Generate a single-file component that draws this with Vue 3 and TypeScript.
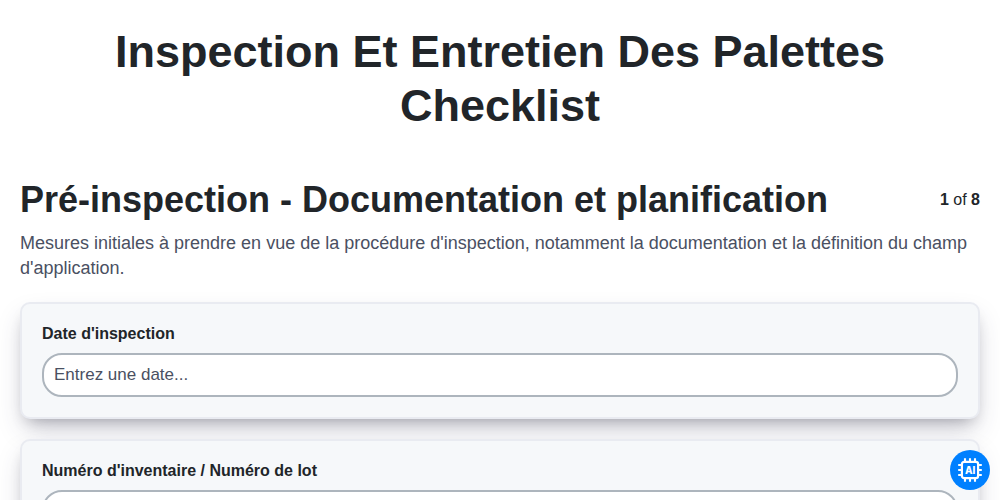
<script setup lang="ts">
import { ref } from 'vue'

interface Field {
  id: string
  label: string
  placeholder: string
}

const step = 1
const totalSteps = 8

const fields: Field[] = [
  { id: 'date', label: "Date d'inspection", placeholder: 'Entrez une date...' },
  { id: 'lot', label: 'Numéro d\'inventaire / Numéro de lot', placeholder: 'Écrire quelque chose...' }
]

const answers = ref<Record<string, string>>({ date: '', lot: '' })
</script>

<template>
  <main class="checklist">
    <h1 class="title">Inspection Et Entretien Des Palettes Checklist</h1>

    <div class="step-header">
      <h2 class="step-title">Pré-inspection - Documentation et planification</h2>
      <div class="step-count"><b>{{ step }}</b> of <b>{{ totalSteps }}</b></div>
    </div>
    <p class="step-description">
      Mesures initiales à prendre en vue de la procédure d'inspection, notamment la documentation et la définition du champ d'application.
    </p>

    <form class="fields" @submit.prevent>
      <div v-for="field in fields" :key="field.id" class="card">
        <label class="label" :for="field.id">{{ field.label }}</label>
        <input
          :id="field.id"
          v-model="answers[field.id]"
          class="input"
          type="text"
          :placeholder="field.placeholder"
        />
      </div>
    </form>

    <button class="ai-button" type="button" aria-label="AI">
      <svg width="24" height="24" viewBox="0 0 24 24" fill="none" stroke="#fff">
        <rect x="3.9" y="3.9" width="16.2" height="16.2" rx="2.2" stroke-width="2.2" />
        <!-- chip pins -->
        <path
          d="M7 .2v3.7M12 .2v3.7M17 .2v3.7M7 20v3.8M12 20v3.8M17 20v3.8M.2 7h3.7M.2 12h3.7M.2 17h3.7M20 7h3.8M20 12h3.8M20 17h3.8"
          stroke-width="2.1"
        />
        <text class="ai-text" x="12.1" y="15.5" text-anchor="middle">AI</text>
      </svg>
    </button>
  </main>
</template>

<style>
html,
body {
  height: 100%;
  overflow: hidden;
  background: #fff;
}
</style>

<style scoped>
.checklist {
  box-sizing: border-box;
  height: 500px;
  overflow: hidden;
  padding: 25px 20px 0;
  font-family: "Liberation Sans", Arial, sans-serif;
  color: #212529;
}

.title {
  margin: 0;
  font-size: 45px;
  line-height: 54px;
  font-weight: 700;
  text-align: center;
}

.step-header {
  display: flex;
  align-items: center;
  justify-content: space-between;
  margin-top: 45px;
}

.step-title {
  margin: 0;
  font-size: 36px;
  line-height: 43px;
  font-weight: 700;
}

.step-count {
  font-size: 16px;
  line-height: 24px;
}

.step-description {
  margin: 10px 0 0;
  font-size: 18px;
  line-height: 25px;
  color: #4a5062;
}

.fields {
  display: flex;
  flex-direction: column;
  gap: 20px;
  margin-top: 21px;
}

.card {
  box-sizing: border-box;
  flex: none;
  height: 117px;
  padding: 18px 20px 20px;
  border: 2px solid #e9ebf1;
  border-radius: 10px;
  background: #f6f8fa;
  box-shadow: rgba(50, 50, 93, 0.25) 0 13px 27px -5px, rgba(0, 0, 0, 0.3) 0 8px 16px -8px;
}

.label {
  display: block;
  margin-bottom: 7px;
  font-size: 16px;
  line-height: 24px;
  font-weight: 700;
}

.input {
  display: block;
  box-sizing: border-box;
  width: 100%;
  height: 44px;
  padding: 0 10px;
  border: 2px solid #adb5bd;
  border-radius: 20px;
  background: #fff;
  font-family: inherit;
  font-size: 17px;
  color: #212529;
  outline: none;
}

.input::placeholder {
  color: #4a5062;
  opacity: 1;
}

.ai-button {
  position: fixed;
  right: 10px;
  bottom: 10px;
  display: flex;
  align-items: center;
  justify-content: center;
  width: 40px;
  height: 40px;
  padding: 0;
  border: 0;
  border-radius: 50%;
  background: #0080ff;
  cursor: pointer;
}

.ai-text {
  font-family: Inter, sans-serif;
  font-size: 9.8px;
  font-weight: 800;
  fill: #fff;
  stroke: none;
}
</style>
